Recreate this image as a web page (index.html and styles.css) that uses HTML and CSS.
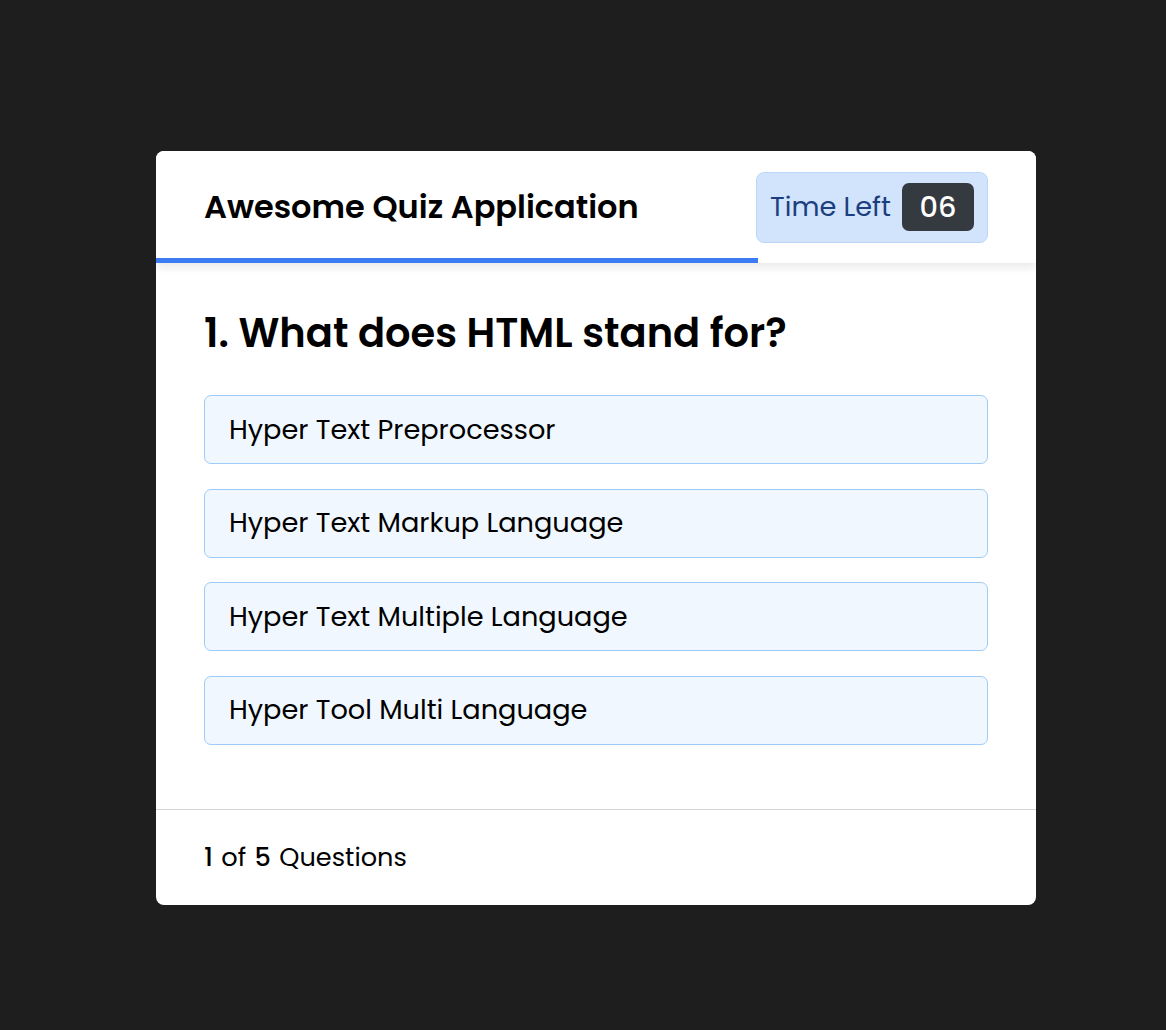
FILE: index.html
```
<!DOCTYPE html>
<html lang="en">
<head>
<meta charset="utf-8">
<title>Awesome Quiz Application</title>
<link rel="stylesheet" href="styles.css">
</head>
<body>
<div class="quiz-box">
  <header class="quiz-header">
    <div class="title">Awesome Quiz Application</div>
    <div class="timer">
      <div class="time-left-txt">Time Left</div>
      <div class="timer-sec">06</div>
    </div>
    <div class="time-line" style="width: 602px;"></div>
  </header>
  <section class="quiz-body">
    <div class="que-text">1. What does HTML stand for?</div>
    <div class="option-list">
      <div class="option">Hyper Text Preprocessor</div>
      <div class="option">Hyper Text Markup Language</div>
      <div class="option">Hyper Text Multiple Language</div>
      <div class="option">Hyper Tool Multi Language</div>
    </div>
  </section>
  <footer class="quiz-footer">
    <div class="total-que"><span class="num">1</span><span>of</span><span class="num">5</span><span>Questions</span></div>
  </footer>
</div>
</body>
</html>
```
FILE: styles.css
```
* { box-sizing: border-box; margin: 0; padding: 0; }
html, body { height: 100%; }
body {
  background: #1e1e1e;
  font-family: "Poppins", "Open Sans", "Liberation Sans", sans-serif;
  color: #000;
  padding: 151px 0 0 156px;
}
.quiz-box {
  width: 880px;
  background: #fff;
  border-radius: 8px;
  overflow: hidden;
}
.quiz-header {
  position: relative;
  z-index: 2;
  height: 112px;
  padding: 0 48px;
  display: flex;
  align-items: center;
  justify-content: space-between;
  background: #fff;
  box-shadow: 0 4px 8px 1px rgba(0,0,0,0.08);
}
.title { font-size: 32px; font-weight: 600; }
.timer {
  width: 232px;
  height: 71px;
  padding: 0 13px;
  background: #d1e4fc;
  border: 1px solid #bcd7f9;
  border-radius: 8px;
  color: #1b3f7e;
  display: flex;
  align-items: center;
  justify-content: space-between;
}
.time-left-txt { font-size: 27.2px; font-weight: 400; }
.timer-sec {
  width: 72px;
  height: 48px;
  line-height: 48px;
  text-align: center;
  background: #353a40;
  color: #fff;
  border-radius: 7px;
  font-size: 28.8px;
  font-weight: 500;
}
.time-line {
  position: absolute;
  left: 0;
  bottom: 0;
  height: 5px;
  background: #3b7cf4;
}
.quiz-body { padding: 40px 48px 64px; }
.que-text { font-size: 40px; font-weight: 600; line-height: 60px; }
.option-list {
  margin-top: 32px;
  display: flex;
  flex-direction: column;
  gap: 24.6px;
}
.option {
  height: 69px;
  padding: 0 24px;
  display: flex;
  align-items: center;
  background: #f0f7fe;
  border: 1.5px solid #9ecbf9;
  border-radius: 7px;
  font-size: 27.2px;
}
.quiz-footer {
  height: 96px;
  padding: 0 48px;
  display: flex;
  align-items: center;
  border-top: 1.5px solid #d6d6d6;
}
.total-que { display: flex; gap: 8.4px; font-size: 25.6px; }
.total-que .num { font-weight: 500; }
```
